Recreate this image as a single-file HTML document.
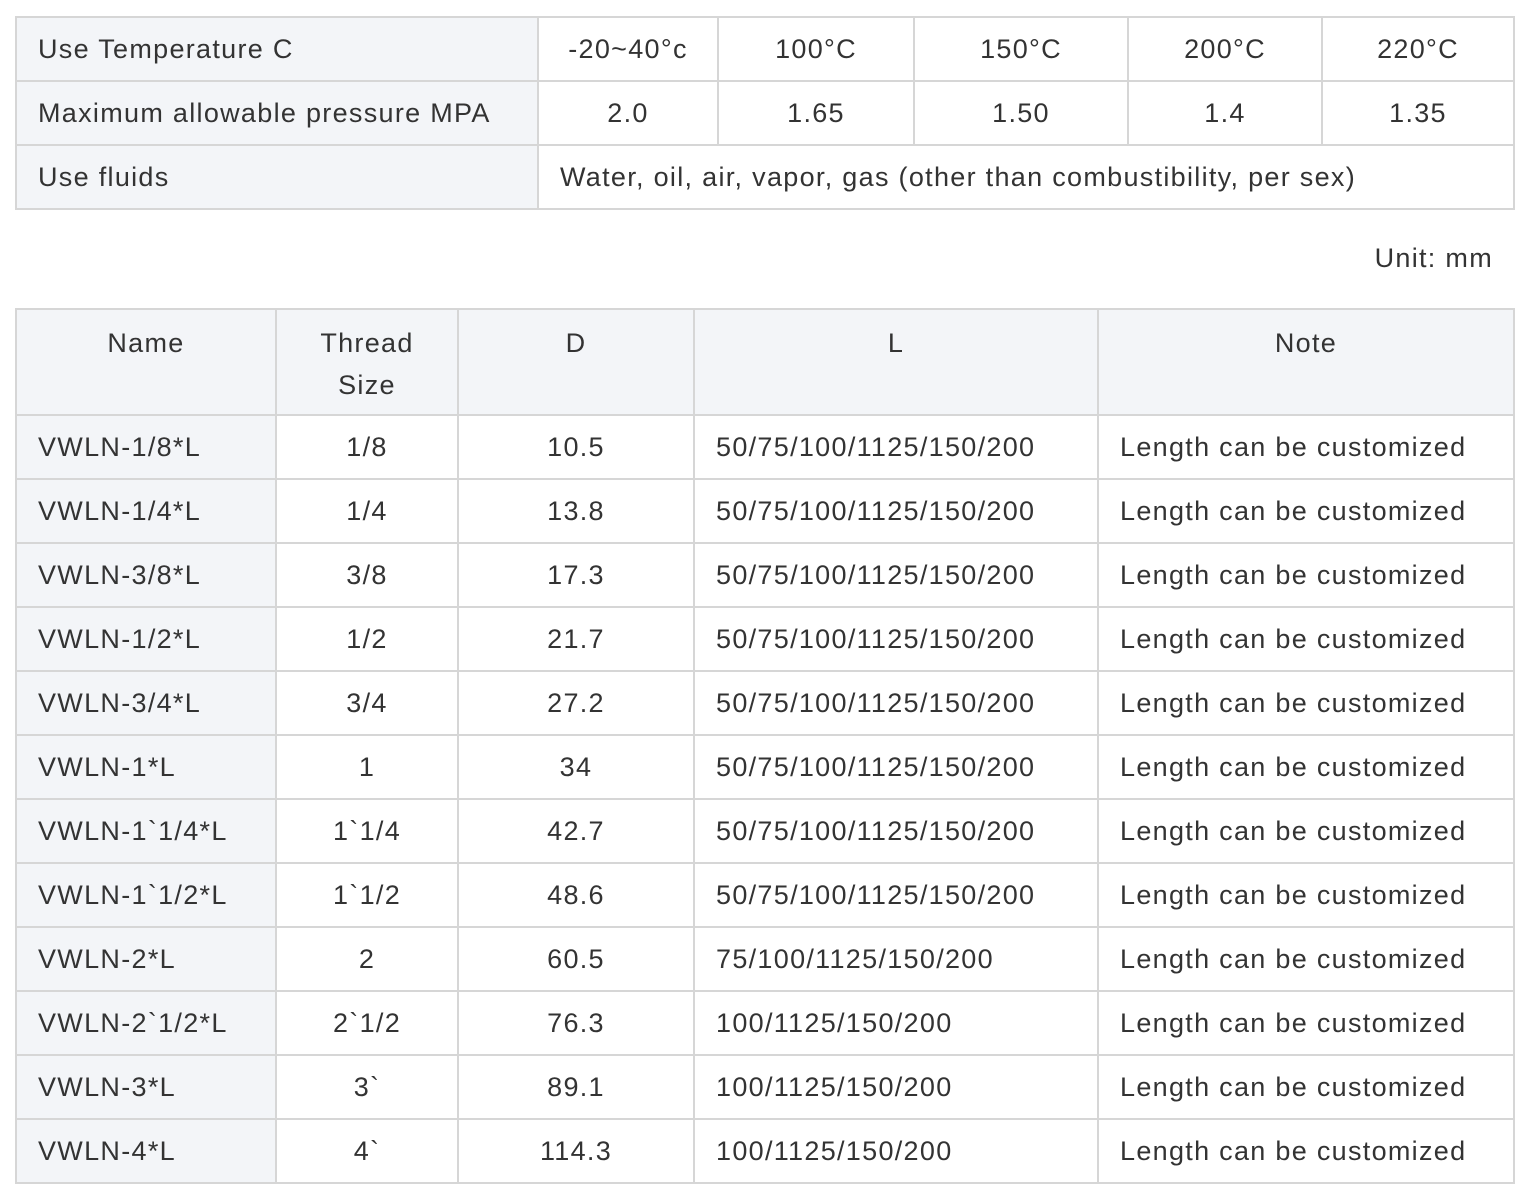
<!DOCTYPE html>
<html><head><meta charset="utf-8"><style>
body{margin:0;background:#fff;font-family:"Liberation Sans",sans-serif;color:#333;font-size:27px;letter-spacing:1.3px}
table{position:absolute;border-collapse:collapse;table-layout:fixed;left:15px}
td{border:2px solid #d6d6d6;padding:0 0 0 21px;height:62px;white-space:nowrap;overflow:hidden}
td.c{text-align:center;padding:0}
.g{background:#f3f5f8}
#t1{top:16px;width:1500px}
#t2{top:308px;width:1500px}
#t2 tr.h td{height:106px;vertical-align:top;padding-top:12px;line-height:42px;box-sizing:border-box}
#unit{position:absolute;top:243px;right:34px}
</style></head><body>
<table id="t1">
<colgroup><col style="width:522px"><col style="width:180px"><col style="width:196px"><col style="width:214px"><col style="width:194px"><col></colgroup>
<tr><td class="g">Use Temperature C</td><td class="c">-20~40°c</td><td class="c">100°C</td><td class="c">150°C</td><td class="c">200°C</td><td class="c">220°C</td></tr>
<tr><td class="g">Maximum allowable pressure MPA</td><td class="c">2.0</td><td class="c">1.65</td><td class="c">1.50</td><td class="c">1.4</td><td class="c">1.35</td></tr>
<tr><td class="g">Use fluids</td><td colspan="5">Water, oil, air, vapor, gas (other than combustibility, per sex)</td></tr>
</table>
<div id="unit">Unit: mm</div>
<table id="t2">
<colgroup><col style="width:260px"><col style="width:182px"><col style="width:236px"><col style="width:404px"><col></colgroup>
<tr class="h"><td class="c g">Name</td><td class="c g">Thread<br>Size</td><td class="c g">D</td><td class="c g">L</td><td class="c g">Note</td></tr>
<tr><td class="g">VWLN-1/8*L</td><td class="c">1/8</td><td class="c">10.5</td><td>50/75/100/1125/150/200</td><td>Length can be customized</td></tr>
<tr><td class="g">VWLN-1/4*L</td><td class="c">1/4</td><td class="c">13.8</td><td>50/75/100/1125/150/200</td><td>Length can be customized</td></tr>
<tr><td class="g">VWLN-3/8*L</td><td class="c">3/8</td><td class="c">17.3</td><td>50/75/100/1125/150/200</td><td>Length can be customized</td></tr>
<tr><td class="g">VWLN-1/2*L</td><td class="c">1/2</td><td class="c">21.7</td><td>50/75/100/1125/150/200</td><td>Length can be customized</td></tr>
<tr><td class="g">VWLN-3/4*L</td><td class="c">3/4</td><td class="c">27.2</td><td>50/75/100/1125/150/200</td><td>Length can be customized</td></tr>
<tr><td class="g">VWLN-1*L</td><td class="c">1</td><td class="c">34</td><td>50/75/100/1125/150/200</td><td>Length can be customized</td></tr>
<tr><td class="g">VWLN-1`1/4*L</td><td class="c">1`1/4</td><td class="c">42.7</td><td>50/75/100/1125/150/200</td><td>Length can be customized</td></tr>
<tr><td class="g">VWLN-1`1/2*L</td><td class="c">1`1/2</td><td class="c">48.6</td><td>50/75/100/1125/150/200</td><td>Length can be customized</td></tr>
<tr><td class="g">VWLN-2*L</td><td class="c">2</td><td class="c">60.5</td><td>75/100/1125/150/200</td><td>Length can be customized</td></tr>
<tr><td class="g">VWLN-2`1/2*L</td><td class="c">2`1/2</td><td class="c">76.3</td><td>100/1125/150/200</td><td>Length can be customized</td></tr>
<tr><td class="g">VWLN-3*L</td><td class="c">3`</td><td class="c">89.1</td><td>100/1125/150/200</td><td>Length can be customized</td></tr>
<tr><td class="g">VWLN-4*L</td><td class="c">4`</td><td class="c">114.3</td><td>100/1125/150/200</td><td>Length can be customized</td></tr>
</table>
</body></html>
